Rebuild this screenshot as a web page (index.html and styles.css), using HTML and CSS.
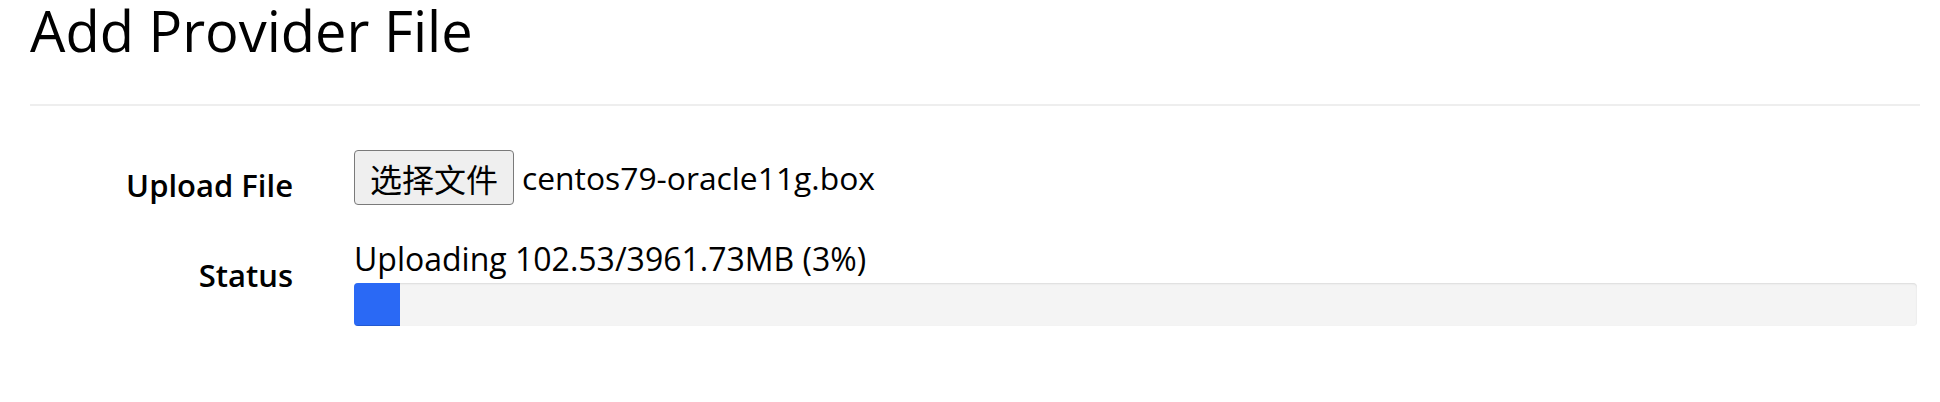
FILE: index.html
```html
<!DOCTYPE html>
<html lang="en">
<head>
<meta charset="utf-8">
<title>Add Provider File</title>
<link rel="stylesheet" href="styles.css">
</head>
<body>
<div class="page">
  <h1 class="title">Add Provider File</h1>
  <hr class="divider">
  <form class="form">
    <div class="row">
      <label class="label">Upload File</label>
      <div class="field file-field">
        <button type="button" class="file-btn">选择文件</button>
        <span class="file-name">centos79-oracle11g.box</span>
      </div>
    </div>
    <div class="row row-status">
      <label class="label">Status</label>
      <div class="field">
        <div class="status-text">Uploading 102.53/3961.73MB (3%)</div>
        <div class="progress"><div class="progress-bar" style="width: 46px"></div></div>
      </div>
    </div>
  </form>
</div>
</body>
</html>
```

FILE: styles.css
```css
html, body {
  margin: 0;
  padding: 0;
  background: #ffffff;
}

body {
  font-family: "Open Sans", "Noto Sans", sans-serif;
  color: #000;
}

.page {
  padding: 0 20px 0 30px;
}

.title {
  margin: 0;
  font-weight: 400;
  font-size: 56px;
  line-height: 1.1;
}

.divider {
  margin: 42px 0 0;
  border: 0;
  border-top: 2px solid #eeeeee;
  height: 0;
}

.form {
  margin-top: 44px;
}

.row {
  display: grid;
  grid-template-columns: 263px 1fr;
  column-gap: 61px;
}

.row-status {
  margin-top: 34px;
}

.label {
  text-align: right;
  font-weight: 600;
  font-size: 31px;
  line-height: 42px;
  padding-top: 14px;
}

.field {
  padding-right: 3px;
}

.file-field {
  display: flex;
  align-items: center;
  gap: 8px;
}

.file-btn {
  height: 55px;
  padding: 0 15px;
  border: 1px solid #7a7a7a;
  border-radius: 4px;
  background: #efefef;
  font-family: "Noto Sans CJK SC", sans-serif;
  font-size: 32px;
  color: #000;
}

.file-name {
  font-size: 31.8px;
  line-height: 40px;
}

.status-text {
  font-size: 32px;
  line-height: 37px;
}

.progress {
  margin-top: 6px;
  height: 43px;
  background: #f4f4f4;
  border-radius: 4px;
  box-shadow: inset 0 1px 2px rgba(0, 0, 0, 0.1);
  overflow: hidden;
}

.progress-bar {
  height: 100%;
  background: #2a69f5;
  box-shadow: inset 0 -1px 0 rgba(0, 0, 0, 0.15);
}
```
